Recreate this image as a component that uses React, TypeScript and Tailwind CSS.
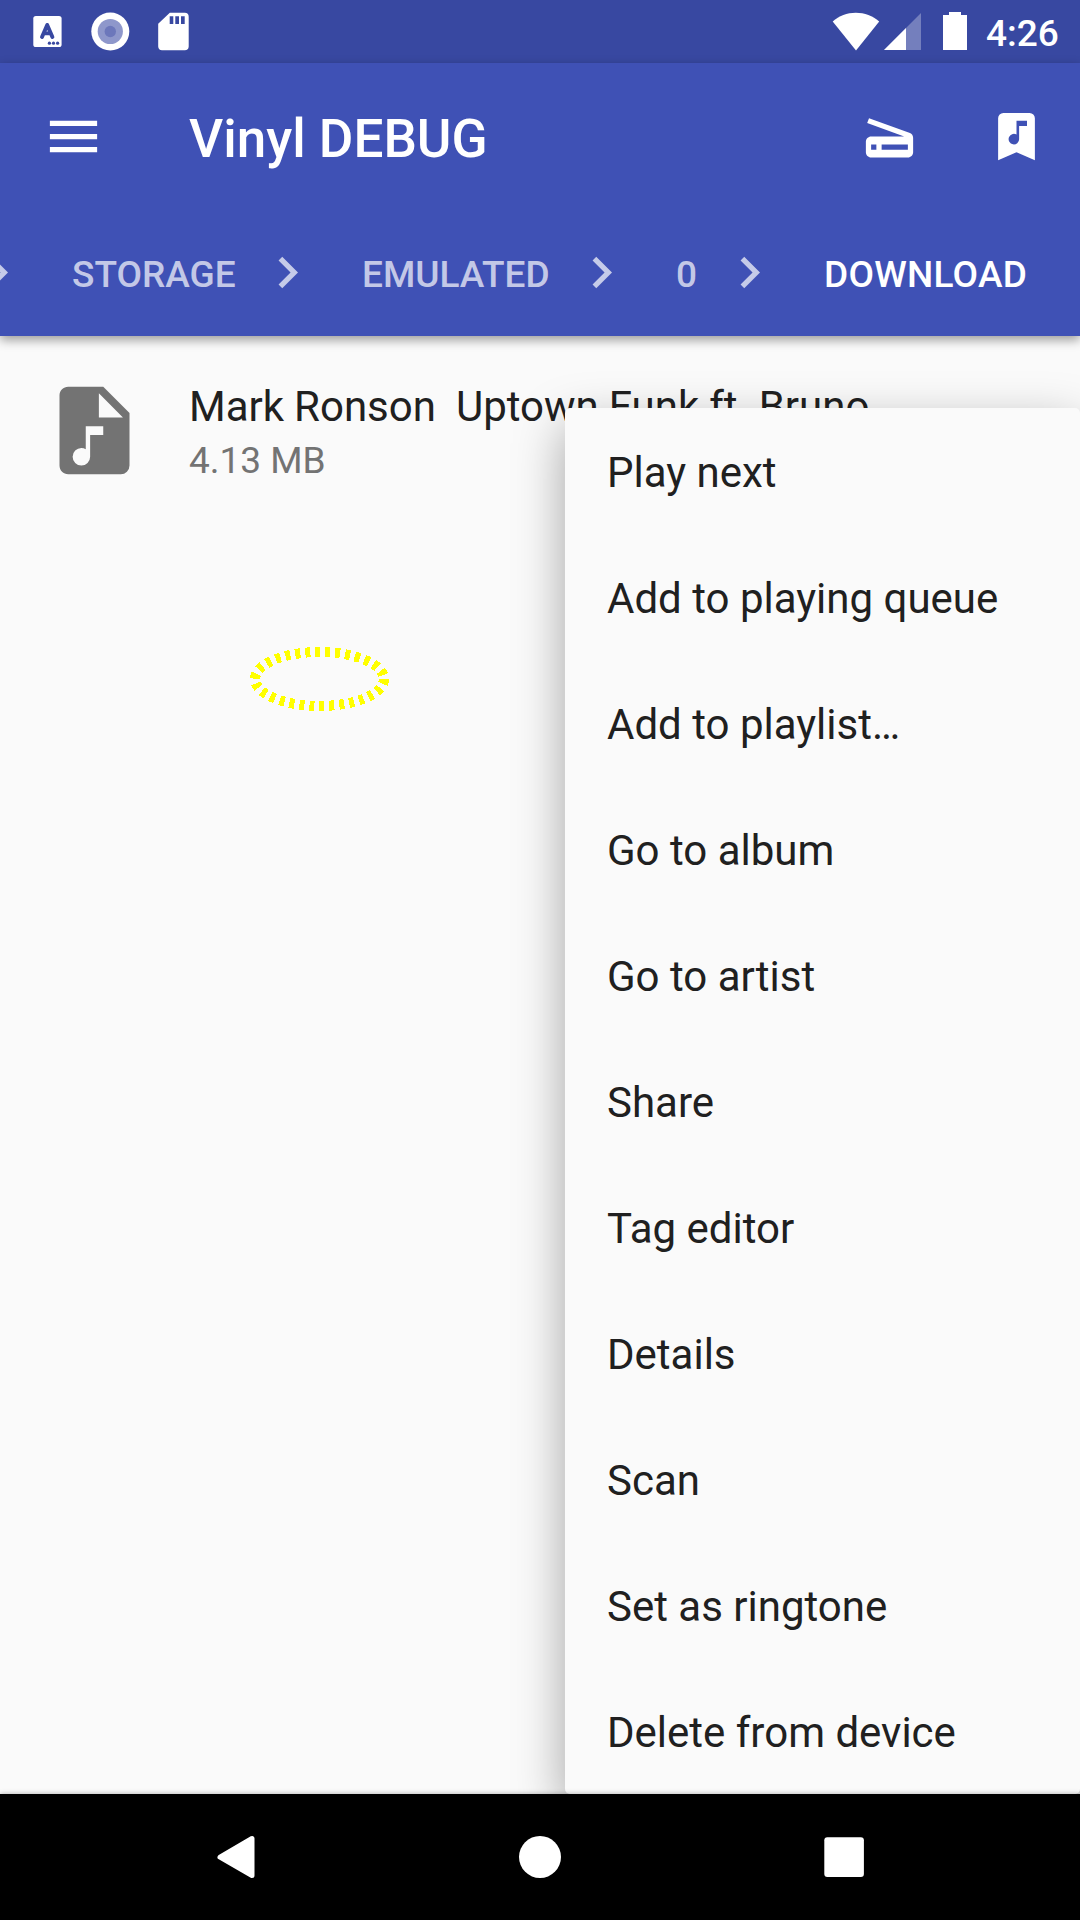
import React from "react";

const menuItems = [
  "Play next",
  "Add to playing queue",
  "Add to playlist…",
  "Go to album",
  "Go to artist",
  "Share",
  "Tag editor",
  "Details",
  "Scan",
  "Set as ringtone",
  "Delete from device",
];

const crumbs = [
  { label: "STORAGE", width: "w-[227px]" },
  { label: "EMULATED", width: "w-[251px]" },
  { label: "0", width: "w-[85px]" },
];

function Icon({ d, className }: { d: string; className: string }) {
  return (
    <svg viewBox="0 0 24 24" fill="currentColor" fillRule="evenodd" className={className}>
      <path d={d} />
    </svg>
  );
}

function Chevron() {
  return (
    <Icon
      d="M10 6L8.59 7.41 13.17 12l-4.58 4.59L10 18l6-6z"
      className="-mt-px size-[63px] shrink-0 text-white/70"
    />
  );
}

function StatusBar() {
  return (
    <div className="h-[63px] shrink-0 bg-[#3848a1] text-white">
      <div className="flex h-full">
        <svg viewBox="0 0 240 63" className="h-[63px] w-[240px]" fill="#fff">
          <rect x="33.3" y="16" width="28.3" height="31" rx="2.6" />
          <path d="M42 37L47.2 24.9L52.4 37M44.2 33.4H50.4" fill="none" stroke="#3848a1" strokeWidth="3.9" strokeLinecap="round" strokeLinejoin="round" />
          <circle cx="49.4" cy="43.2" r="1.6" fill="#3848a1" />
          <circle cx="53.5" cy="43.2" r="1.6" fill="#3848a1" />
          <circle cx="57.6" cy="43.2" r="1.6" fill="#3848a1" />
          <circle cx="110.3" cy="31.5" r="19" />
          <circle cx="110.3" cy="31.5" r="12.6" fill="#8e97cb" />
          <circle cx="110.3" cy="31.5" r="5.7" fill="#6c77bb" />
          <path fillRule="evenodd" d="M169.8 12.7H184.8A4 4 0 0 1 188.7 16.7V46.5A4 4 0 0 1 184.8 50.3H162A4 4 0 0 1 158.2 46.5V23.8ZM169.7 16.3V24H173.3V16.3ZM175.3 16.3V24H179V16.3ZM181 16.3V24H184.7V16.3Z" />
        </svg>
        <svg viewBox="820 0 160 63" className="ml-auto h-[63px] w-[160px]" fill="#fff">
          <path d="M832.7 21.5C839 16 847 12.8 855.8 12.8S872.8 16 879.2 21.5L856 50.4Z" />
          <path d="M884 50L921 13V50Z" opacity=".3" />
          <path d="M884 50L906 28V50Z" />
          <path d="M949 12h12v3h6v35h-24V15h6z" />
        </svg>
        <span className="w-[100px] pl-[6px] text-[37px] leading-[68px] font-medium">4:26</span>
      </div>
    </div>
  );
}

function AppBar() {
  return (
    <header className="relative z-10 h-[273px] shrink-0 bg-[#3f51b5] text-white shadow-[0_4px_10px_rgba(0,0,0,0.38)]">
      <div className="flex h-[147px] items-center pr-[32px] pl-[42px]">
        <Icon d="M3 18h18v-2H3v2zm0-5h18v-2H3v2zm0-7v2h18V6H3z" className="size-[63px]" />
        <h1 className="ml-[84px] flex-1 pt-[5px] text-[53px] leading-[60px] font-medium">Vinyl DEBUG</h1>
        <Icon
          d="M19.8 10.7L4.2 5l-.7 1.9L17.6 12H5c-1.1 0-2 .9-2 2v4c0 1.1.9 2 2 2h14c1.1 0 2-.9 2-2v-5.5c0-.8-.5-1.6-1.2-1.8zM7 17H5v-2h2v2zm12 0H9v-2h10v2z"
          className="mr-[64px] size-[63px]"
        />
        <Icon
          d="M7 3H17A2 2 0 0 1 19 5V21L12 18L5 21V5A2 2 0 0 1 7 3ZM12 6V11.27A2 2 0 1 0 13 13V8H16V6Z"
          className="size-[63px]"
        />
      </div>
      <nav className="flex h-[126px] items-center overflow-hidden text-[37px] font-medium">
        <div className="-ml-[34px] flex shrink-0">
          <Chevron />
        </div>
        {crumbs.map((crumb) => (
          <React.Fragment key={crumb.label}>
            <span className={`${crumb.width} shrink-0 pt-[3px] pl-[43px] text-white/70`}>{crumb.label}</span>
            <Chevron />
          </React.Fragment>
        ))}
        <span className="shrink-0 pt-[3px] pl-[43px] tracking-[0.25px]">DOWNLOAD</span>
      </nav>
    </header>
  );
}

export default function App() {
  return (
    <div className="relative flex h-[1920px] w-[1080px] flex-col overflow-hidden bg-[#fafafa] font-[Roboto,sans-serif]">
      <StatusBar />
      <AppBar />
      <main className="relative flex-1 overflow-hidden">
        <div className="flex h-[189px] items-center px-[42px]">
          <Icon
            d="M13,9H18.5L13,3.5V9M6,2H14L20,8V20A2,2 0 0,1 18,22H6C4.89,22 4,21.1 4,20V4C4,2.89 4.89,2 6,2M9,16A2,2 0 0,0 7,18A2,2 0 0,0 9,20A2,2 0 0,0 11,18V13H14V11H10V16.27C9.71,16.1 9.36,16 9,16Z"
            className="size-[105px] text-[#737373]"
          />
          <div className="ml-[42px] pt-[4px]">
            <div className="text-[42px] leading-[55px] whitespace-pre text-[#202020] [word-spacing:-0.4px]">Mark Ronson  Uptown Funk ft. Bruno</div>
            <div className="pt-px text-[37px] leading-[51px] text-[#737373]">4.13 MB</div>
          </div>
        </div>
        <svg viewBox="0 0 150 76" className="absolute top-[305px] left-[244px] h-[76px] w-[150px]">
          <ellipse cx="75.5" cy="38" rx="64.5" ry="27" fill="none" stroke="#ff0" strokeWidth="10" strokeDasharray="5 5" shapeRendering="crispEdges" />
        </svg>
        <ul className="absolute top-[72px] left-[565px] w-[515px] rounded-[5px] bg-[#fafafa] text-[42px] text-[#202020] shadow-[0_18px_50px_rgba(0,0,0,0.35)]">
          {menuItems.map((item) => (
            <li key={item} className="flex h-[126px] items-center pt-[2px] pl-[42px]">
              {item}
            </li>
          ))}
        </ul>
      </main>
      <footer className="z-10 h-[126px] shrink-0 bg-black shadow-[0_0_5px_rgba(0,0,0,0.3)]">
        <svg viewBox="0 0 1080 126" className="h-[126px] w-[1080px]" fill="#fff">
          <path d="M220 63.2L252 44.5V81.5Z" stroke="#fff" strokeWidth="5" strokeLinejoin="round" />
          <circle cx="540" cy="63" r="21" />
          <rect x="824.3" y="43.3" width="39.6" height="39.6" rx="3" />
        </svg>
      </footer>
    </div>
  );
}
